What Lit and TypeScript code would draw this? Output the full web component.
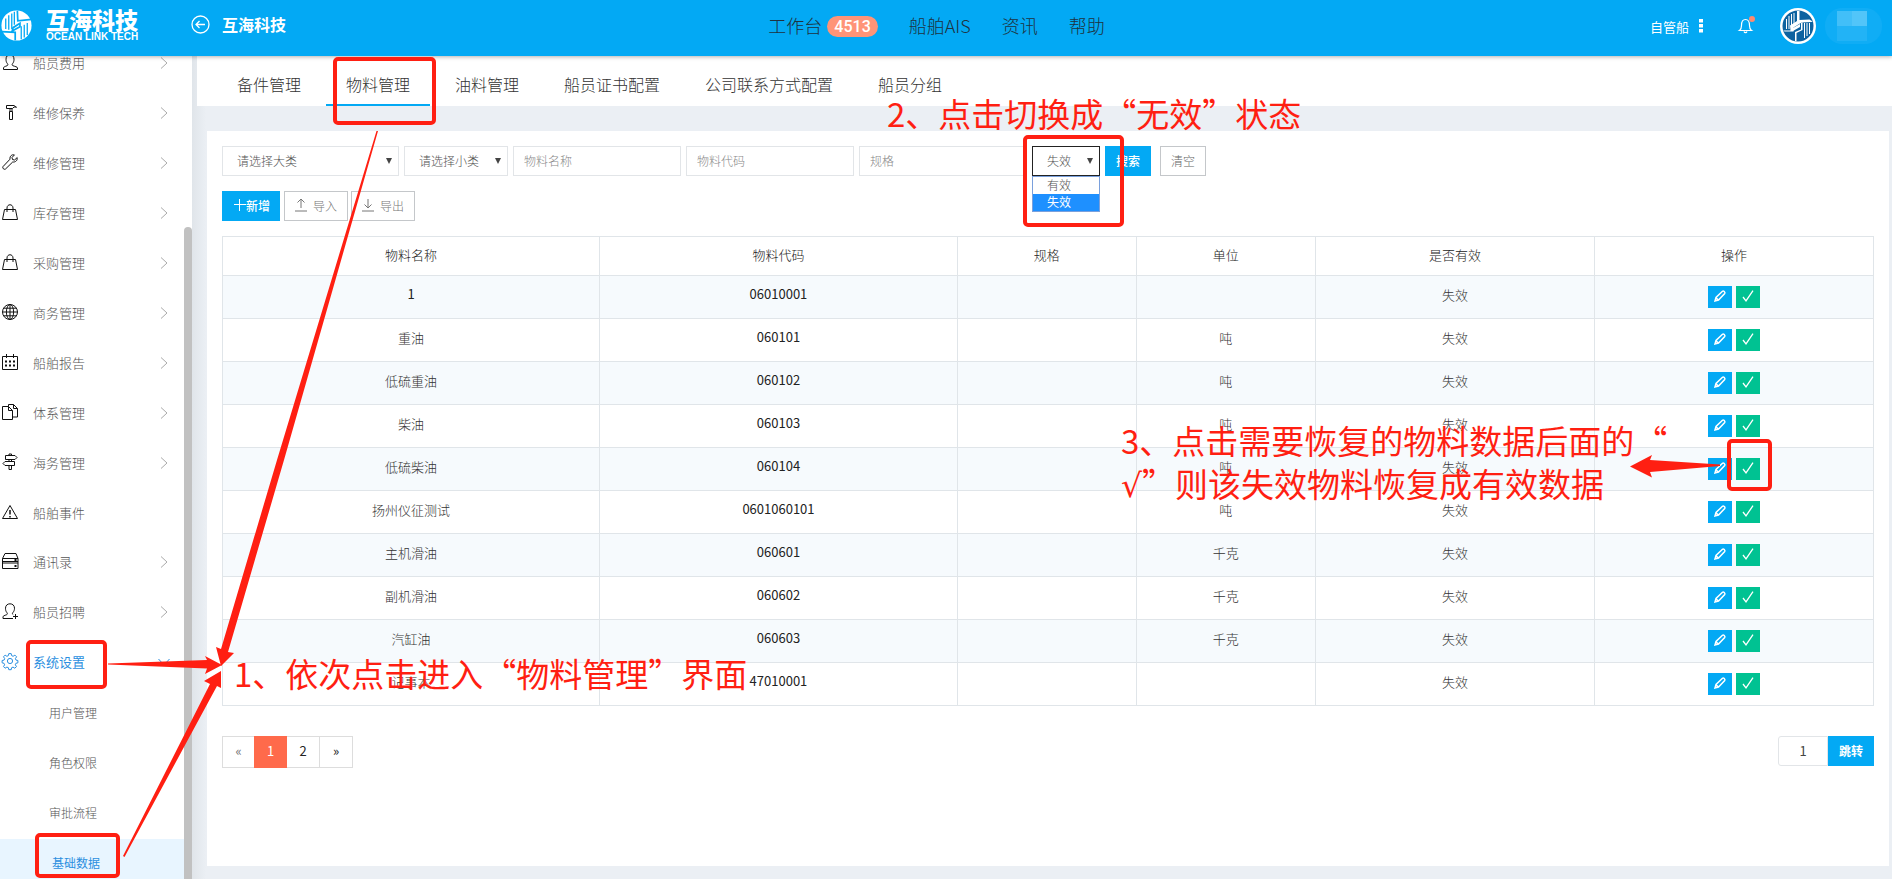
import { LitElement, html, svg, css } from "lit";
import { customElement, property } from "lit/decorators.js";
import { classMap } from "lit/directives/class-map.js";

const icons = {
  user: svg`<path d="M1.5 15.5v-1.6c0-1 1.6-1.4 3.6-2.2 1-.4.9-1.4.3-2.1C4.400 8.500 4 7 4 5.200 4 2.300 5.600.8 8 .8s4 1.500 4 4.400c0 1.800-.4 3.300-1.400 4.400-.6.7-.7 1.700.3 2.100 2 .8 4.600 1.200 4.600 2.200v1.600z"/>`,
  hammer: svg`<path d="M4.500 1.500h7.500l2.500 2M4.500 1.500v3h6l1.500-1.500h2.500M7.500 7.500h3v8h-3zM8 4.500v3M10 4.500v3"/>`,
  wrench: svg`<path d="M15.200 3.600 12.500 6l-2-.5L10 3.500 12.400.9C10 .2 7.600 2 8 5.200L1 12.600c-1 1.400 1 3.500 2.500 2.400L10.700 8c2.800.4 5-1.600 4.500-4.400z"/>`,
  bag: svg`<path d="M2.500 5.500h11l2 10H.5zM5 8V4c0-4.300 6-4.300 6 0v4"/>`,
  globe: svg`<circle cx="8" cy="8" r="7.500"/><ellipse cx="8" cy="8" rx="3.600" ry="7.500"/><path d="M8 .5v15M.5 8h15M1.700 4.200h12.600M1.700 11.800h12.600"/>`,
  calendar: svg`<path d="M.5 2.500h15v13H.5zM4.500 0v4M11.500 0v4"/><path stroke-width="2" d="M3 7.500h2M7 7.500h2M11 7.500h2M3 11.500h2M7 11.500h2M11 11.500h2"/>`,
  docs: svg`<path d="M.5 2.500h6l4 4v9H.5zM6.500 2.500v4h4M6.500 2.500v-2h5l4 4v8.500h-5M11.500.5v4h4"/>`,
  sign: svg`<path d="M3.500 1.500h9.500l2 2-2 2H3.500zM12.500 7.500H3l-2 2 2 2h9.500zM7 5.500v2M9.500 5.500v2M7 11.500v4h2.500v-4M7 1.500V0h2.500v1.500"/>`,
  warn: svg`<path d="M8 1.500 15.500 14.500H.5z"/><path stroke-width="1.500" d="M8 6v4.500M8 12v1.500"/>`,
  server: svg`<path d="M.5 5.500 3 .5h11l2 5v10H.5zM.5 5.500H16M.5 8.500H16M.5 10H16"/><path stroke-width="1.800" d="M12.500 7h2M12.500 13h2"/>`,
  recruit: svg`<path d="M11 15.500H1v-1.600c0-1 1.600-1.400 3.600-2.200 1-.4.9-1.400.3-2.100C3.900 8.500 3.500 7 3.500 5.200 3.500 2.300 5.600.8 8 .8s4.500 1.500 4.500 4.400c0 1.800-.6 3.300-1.600 4.400-.6.7-.7 1.500.3 2.100M13.500 11v5M11 13.500h5"/>`,
  gear: svg`<circle cx="8" cy="8" r="2.600"/><path d="M6.800.6h2.400l.4 2 1.500.7 1.800-1.200 1.700 1.700-1.200 1.800.6 1.500 1.900.4v2.300l-2 .5-.6 1.500 1.200 1.800-1.700 1.600-1.800-1.100-1.400.6-.4 2H6.800l-.4-2-1.500-.6-1.800 1.100-1.600-1.600 1.100-1.800-.6-1.500-1.900-.5V7.500l2-.4.600-1.500-1.200-1.800 1.600-1.700 1.800 1.200 1.500-.700z"/>`,
};

type IconName = keyof typeof icons;

interface MenuItem {
  name: string;
  icon: IconName;
  leaf?: boolean;
  open?: boolean;
}

const menu: MenuItem[] = [
  { name: "船员费用", icon: "user" },
  { name: "维修保养", icon: "hammer" },
  { name: "维修管理", icon: "wrench" },
  { name: "库存管理", icon: "bag" },
  { name: "采购管理", icon: "bag" },
  { name: "商务管理", icon: "globe" },
  { name: "船舶报告", icon: "calendar" },
  { name: "体系管理", icon: "docs" },
  { name: "海务管理", icon: "sign" },
  { name: "船舶事件", icon: "warn", leaf: true },
  { name: "通讯录", icon: "server" },
  { name: "船员招聘", icon: "recruit" },
  { name: "系统设置", icon: "gear", open: true },
];

const submenu = ["用户管理", "角色权限", "审批流程", "基础数据"];

const tabs = ["备件管理", "物料管理", "油料管理", "船员证书配置", "公司联系方式配置", "船员分组"];

const columns = ["物料名称", "物料代码", "规格", "单位", "是否有效", "操作"];

const rows: [string, string, string][] = [
  ["1", "06010001", ""],
  ["重油", "060101", "吨"],
  ["低硫重油", "060102", "吨"],
  ["柴油", "060103", "吨"],
  ["低硫柴油", "060104", "吨"],
  ["扬州仪征测试", "0601060101", "吨"],
  ["主机滑油", "060601", "千克"],
  ["副机滑油", "060602", "千克"],
  ["汽缸油", "060603", "千克"],
  ["记事本", "47010001", ""],
];

@customElement("top-bar")
class TopBar extends LitElement {
  static styles = css`
    :host { display: block; position: relative; z-index: 2; }
    .bar {
      display: grid; grid-template-columns: 1fr auto 1fr; align-items: center;
      height: 56px; background: #03a9f4; color: #fff;
      box-shadow: 0 1px 4px rgba(0, 0, 0, 0.3);
    }
    a { color: inherit; text-decoration: none; }
    .left { display: flex; align-items: center; height: 56px; }
    .logo { display: flex; align-items: center; width: 191px; gap: 14px; padding-bottom: 6px; }
    .mark { width: 31px; height: 31px; margin-left: 1px; }
    .brand { display: flex; flex-direction: column; gap: 1px; padding-bottom: 3px; }
    .cn { font-size: 23px; line-height: 24px; font-weight: 900; }
    .en { font: bold 10px/9px "Liberation Sans", sans-serif; }
    .back { display: flex; align-items: center; gap: 12px; font-size: 16px; font-weight: 700; padding-bottom: 8px; }
    .back svg { width: 19px; height: 19px; }
    .nav { display: flex; align-items: center; gap: 31px; padding: 0 19px 6px 0; font-size: 18px; line-height: 26px; color: #1f3240; }
    .work { display: flex; align-items: center; gap: 5px; }
    .badge {
      font: 500 16px/21px "Roboto", sans-serif; color: #fff; background: #ff9478;
      border-radius: 11px; padding: 0 7px; margin-top: 3px;
    }
    .right { display: flex; align-items: center; justify-content: flex-end; padding: 0 10px 4px 0; }
    .fleet {
      display: flex; align-items: center; gap: 10px; border: 0; background: none;
      padding: 0; color: #fff; font: inherit; font-size: 13px; font-weight: 400;
    }
    .dots { width: 4px; height: 14px; }
    .bell { border: 0; background: none; padding: 0; margin: 0 25px 0 34px; height: 22px; }
    .bell svg { width: 18px; height: 18px; }
    .avatar { width: 36px; height: 36px; margin-right: 9px; }
    .account { width: 57px; height: 36px; }
  `;

  render() {
    return html`
      <header class="bar">
        <div class="left">
          <a class="logo" href="#">
            <svg class="mark" viewBox="0 0 36 36">
              <circle cx="18" cy="18" r="17.500" fill="#fff" />
              <path fill="none" stroke="#03a9f4" stroke-width="1.500" d="M5.500 10v12M9 6v17M12.500 4v18M15.500 2v15M23.500 19v15M27 17v15M30.500 15v14" />
              <path fill="none" stroke="#03a9f4" stroke-width="2" d="m19 1 .5 11.500 16-1.500M16.500 35v-9L.5 25M13 24.500l9-5v-4l-8 5z" />
            </svg>
            <span class="brand"><span class="cn">互海科技</span><span class="en">OCEAN LINK TECH</span></span>
          </a>
          <a class="back" href="#">
            <svg viewBox="0 0 19 19" fill="none" stroke="#fff" stroke-width="1.300">
              <circle cx="9.500" cy="9.500" r="8.500" /><path d="M14 9.500H5.500M8.500 6 5 9.500 8.500 13" />
            </svg>互海科技</a>
        </div>
        <nav class="nav">
          <a class="work" href="#">工作台<span class="badge">4513</span></a>
          <a href="#">船舶AIS</a><a href="#">资讯</a><a href="#">帮助</a>
        </nav>
        <div class="right">
          <button class="fleet">自管船
            <svg class="dots" viewBox="0 0 4 14" fill="#fff"><path d="M0 0h4v3.500H0zM0 5h4v3.500H0zM0 10h4v3.500H0z" /></svg>
          </button>
          <button class="bell" aria-label="通知">
            <svg viewBox="0 0 18 18" fill="none" stroke="#fff" stroke-width="1.200">
              <path d="M2.500 14.500c1.500-1 2-2.200 2-5C4.500 5 6 3.500 8.500 3.500s4 1.500 4 6c0 2.800.5 4 2 5zM7 15.500c.5 1.500 2.500 1.500 3 0" />
              <circle cx="15" cy="3" r="3" fill="#ff8a70" stroke="none" />
            </svg>
          </button>
          <svg class="avatar" viewBox="0 0 36 36">
            <circle cx="18" cy="18" r="18" fill="#fff" /><circle cx="18" cy="18" r="15.500" fill="#0d62a0" />
            <path fill="#fff" d="M17 3h2.500v9l10-.5 3 2-1 .5-10 .5-8 5v4h-9l-1-1h7l-.5-5 7-4.500zM15 33v-9l6-2.500V15l1.500-.5V22l-6 3v8z" />
            <path fill="none" stroke="#fff" d="M6.500 11v10M9 8v13M11.500 6v12M14 5v11M24.500 15v15M27 15v13M29.500 15v11" />
            <path fill="#fff" d="m13 23 7-4v-3l-8 4.500z" />
          </svg>
          <svg class="account" viewBox="0 0 57 36" aria-label="账户">
            <rect width="57" height="36" rx="17" fill="#10adf5" />
            <path fill="#42bff8" d="M12 3h15v15H12z" /><path fill="#52c5f9" d="M27 3h15v15H27z" />
            <path fill="#22b3f6" d="M12 18h30v15H12z" />
          </svg>
        </div>
      </header>
    `;
  }
}

@customElement("side-menu")
class SideMenu extends LitElement {
  static styles = css`
    :host { display: flex; position: relative; width: 192px; flex: none; overflow: hidden; background: #fff; }
    .list { flex: 1; margin-top: -17px; }
    a { display: flex; align-items: center; box-sizing: border-box; height: 50px; padding-bottom: 3px; color: #555; text-decoration: none; font-size: 13px; }
    a.leaf { height: 49px; }
    .icon { width: 16px; height: 16px; margin: 0 15px 1px 2px; overflow: visible; fill: none; stroke: #111; }
    .name { flex: 1; }
    .arrow { width: 8px; height: 12px; margin-right: 16px; fill: none; stroke: #aaa; }
    .open { color: #2b8fe0; font-weight: 400; }
    .open .icon, .open .arrow { stroke: #2b8fe0; }
    .open .arrow { transform: rotate(90deg); }
    .sub { padding-top: 1px; }
    .sub a { padding-left: 49px; font-size: 12px; }
    .sub a.current { background: #e8f5ff; color: #2b8fe0; padding-left: 52px; font-weight: 400; }
    .track { width: 8px; padding-top: 171px; display: flex; }
    .thumb { flex: 1; background: #c1c1c1; border-radius: 4px 4px 0 0; }
  `;

  render() {
    return html`
      <nav class="list">
        ${menu.map(
          (m) => html`<a href="#" class=${classMap({ leaf: !!m.leaf, open: !!m.open })}>
            <svg class="icon" viewBox="0 0 16 16">${icons[m.icon]}</svg>
            <span class="name">${m.name}</span>
            ${m.leaf ? "" : html`<svg class="arrow" viewBox="0 0 8 12"><path d="m1 .5 6 5.500-6 5.500" /></svg>`}
          </a>`
        )}
        <div class="sub">
          ${submenu.map((s) => html`<a href="#" class=${classMap({ current: s === "基础数据" })}>${s}</a>`)}
        </div>
      </nav>
      <div class="track"><div class="thumb"></div></div>
    `;
  }
}

@customElement("material-page")
class MaterialPage extends LitElement {
  static styles = css`
    :host { display: flex; flex-direction: column; flex: 1; min-width: 0; padding-left: 5px; background: linear-gradient(to right, #e0e5ea, #ebeff4 14px); }
    * { box-sizing: border-box; }
    button, input, select { font: inherit; font-size: 12px; border-radius: 0; margin: 0; }
    .tabs { display: flex; gap: 5px; height: 50px; background: #fff; padding-left: 20px; }
    .tabs a { padding: 0 20px; line-height: 57px; font-size: 16px; color: #333; text-decoration: none; height: 50px; overflow: hidden; }
    .tabs a.on { border-bottom: 2px solid #03a9f4; }
    .card { flex: 1; margin: 25px 3px 13px 10px; background: #fff; padding: 15px; }
    .filters { display: flex; gap: 5px; height: 30px; }
    .pick { position: relative; }
    .pick select {
      appearance: none; width: 100%; height: 30px; border: 1px solid #e2e5e8; background: #fff;
      color: #555; padding: 0 14px 2px;
    }
    .pick svg { position: absolute; right: 7px; top: 12px; width: 6px; height: 6px; fill: #444; pointer-events: none; }
    .major { width: 177px; }
    .minor { width: 104px; }
    .state { width: 68px; }
    .pick.state select { border-color: #222; }
    .options {
      position: absolute; top: 30px; left: 0; right: 0; z-index: 1; margin: 0; padding: 0; list-style: none;
      border: 1px solid #7aa0dc; background: #fff; font-size: 12px; line-height: 16px; color: #555;
    }
    .options li { padding: 0 14px 1px; }
    .options .chosen { background: #1e90ff; color: #fff; font-weight: 400; }
    input { width: 168px; height: 30px; border: 1px solid #e2e5e8; padding: 0 10px 2px; color: #444; outline: 0; background: #fff; }
    input::placeholder { color: #888; }
    .btn { height: 30px; border: 1px solid #c4c7ca; background: #fff; color: #666; padding: 0 10px 2px; display: flex; align-items: center; white-space: nowrap; }
    .primary { border-color: #03a9f4; background: #03a9f4; color: #fff; font-weight: 500; }
    .clear { margin-left: 4px; }
    .tools { display: flex; gap: 3px; margin: 15px 0; }
    .tools .primary { width: 58px; margin-right: 1px; }
    .tools svg { width: 14px; height: 14px; flex: none; fill: none; stroke: currentColor; }
    .plus { margin-right: -1px; }
    .tools .io { gap: 5px; width: 64px; padding: 0 9px 2px; color: #777; }
    table { width: 100%; border-collapse: collapse; table-layout: fixed; font-size: 13px; }
    th, td { border: 1px solid #e0e5e9; text-align: center; padding: 0 0 5px; }
    th { font-weight: 300; color: #222; height: 39px; padding-bottom: 4px; }
    td { height: 43px; line-height: 20px; color: #333; }
    .num { color: #222; font-weight: 400; padding-bottom: 6px; }
    tbody tr:nth-child(odd) { background: #f6fafd; }
    .c-name { width: 22.85%; }
    .c-code { width: 21.65%; }
    .c-small { width: 10.85%; }
    .c-mid { width: 16.9%; }
    td.ops { padding: 0; }
    .pair { display: flex; justify-content: center; gap: 4px; }
    .act { width: 24px; height: 22px; border: 0; padding: 4px 6px 6px; background: #03a9f4; }
    .act.ok { background: #00c292; }
    .act svg { display: block; width: 12px; height: 12px; fill: none; stroke: #fff; overflow: visible; }
    .foot { display: flex; justify-content: space-between; margin-top: 30px; }
    .pages { display: flex; }
    .pages a { width: 34px; height: 32px; margin-right: -1px; border: 1px solid #ddd; text-align: center; line-height: 28px; font-size: 13px; font-weight: 400; color: #222; text-decoration: none; }
    .pages a:first-child, .pages a.on { width: 33px; }
    .pages .on { background: #ff6a4b; border-color: #ff6a4b; color: #fff; position: relative; }
    .pages .off { color: #777; }
    .jump { display: flex; }
    .jump input { width: 50px; text-align: center; border-radius: 3px 0 0 3px; font-size: 13px; font-weight: 400; }
    .jump .btn { font-weight: 700; }
  `;

  private caret = html`<svg viewBox="0 0 7 7"><path d="M0 0h7L3.500 7z" /></svg>`;

  render() {
    return html`
      <nav class="tabs">
        ${tabs.map((t) => html`<a href="#" class=${classMap({ on: t === "物料管理" })}>${t}</a>`)}
      </nav>
      <section class="card">
        <form class="filters" @submit=${(e: Event) => e.preventDefault()}>
          <div class="pick major"><select aria-label="大类"><option>请选择大类</option></select>${this.caret}</div>
          <div class="pick minor"><select aria-label="小类"><option>请选择小类</option></select>${this.caret}</div>
          <input aria-label="物料名称" placeholder="物料名称" />
          <input aria-label="物料代码" placeholder="物料代码" />
          <input aria-label="规格" placeholder="规格" />
          <div class="pick state">
            <select aria-label="是否有效"><option>有效</option><option selected>失效</option></select>${this.caret}
            <ul class="options" role="listbox" aria-label="是否有效">
              <li role="option">有效</li>
              <li role="option" class="chosen" aria-selected="true">失效</li>
            </ul>
          </div>
          <button class="btn primary">搜索</button>
          <button class="btn clear" type="reset">清空</button>
        </form>
        <div class="tools">
          <button class="btn primary"><svg class="plus" viewBox="0 0 14 14"><path d="M1 6.500h12M6.500 1v12" /></svg>新增</button>
          <button class="btn io"><svg viewBox="0 0 14 14"><path d="M7 10V1M3.500 4.500 7 1l3.500 3.500M1 13h12" /></svg>导入</button>
          <button class="btn io"><svg viewBox="0 0 14 14"><path d="M7 1v9M3.500 6.500 7 10l3.500-3.500M1 13h12" /></svg>导出</button>
        </div>
        <table>
          <colgroup>
            <col class="c-name" /><col class="c-code" /><col class="c-small" /><col class="c-small" /><col class="c-mid" /><col />
          </colgroup>
          <thead><tr>${columns.map((c) => html`<th>${c}</th>`)}</tr></thead>
          <tbody>
            ${rows.map(
              ([name, code, unit]) => html`<tr>
                <td class=${classMap({ num: name === "1" })}>${name}</td>
                <td class="num">${code}</td>
                <td></td>
                <td>${unit}</td>
                <td>失效</td>
                <td class="ops">
                  <div class="pair">
                    <button class="act" aria-label="编辑">
                      <svg viewBox="0 0 12 12"><path stroke-width="1.500" d="m1 11 1-3.500L8.500 1.300c1-.9 3 .900 2.200 2.200L4.500 10zM2 7.800 4.300 10" /></svg>
                    </button>
                    <button class="act ok" aria-label="恢复">
                      <svg viewBox="0 0 12 12"><path stroke-width="1.300" d="m1 7 3 3.800L11 .7" /></svg>
                    </button>
                  </div>
                </td>
              </tr>`
            )}
          </tbody>
        </table>
        <div class="foot">
          <nav class="pages">
            <a class="off" href="#">«</a><a class="on" href="#">1</a><a href="#">2</a><a href="#">»</a>
          </nav>
          <form class="jump" @submit=${(e: Event) => e.preventDefault()}>
            <input aria-label="页码" value="1" /><button class="btn primary">跳转</button>
          </form>
        </div>
      </section>
    `;
  }
}

@customElement("guide-note")
class GuideNote extends LitElement {
  @property({ type: Number }) step = 0;
  static styles = css`
    :host { position: absolute; color: #ff1f12; font-size: 33px; line-height: 43px; font-weight: 400; white-space: pre; }
  `;
  render() {
    return html`${this.step}、<slot></slot>`;
  }
}

@customElement("app-root")
class AppRoot extends LitElement {
  static styles = css`
    :host {
      display: flex; flex-direction: column; position: relative; height: 100vh; overflow: hidden;
      background: #ebeff4; font-family: "Noto Sans CJK SC", sans-serif; font-weight: 300; font-size: 13px;
    }
    .body { flex: 1; display: flex; min-height: 0; }
    .marks { position: absolute; inset: 0; width: 100%; height: 100%; z-index: 3; pointer-events: none; }
    .boxes { fill: none; stroke: #ff1f12; stroke-width: 4; }
    .arrows { fill: #ff1f12; }
    guide-note { z-index: 4; }
    .n1 { left: 234px; top: 652px; }
    .n2 { left: 887px; top: 92px; }
    .n3 { left: 1121px; top: 419px; }
    .root { font-family: "DejaVu Sans", sans-serif; line-height: 1; }
  `;

  render() {
    return html`
      <top-bar></top-bar>
      <div class="body">
        <side-menu></side-menu>
        <material-page></material-page>
      </div>
      <svg class="marks" aria-hidden="true">
        <g class="boxes">
          <rect x="335" y="59" width="99" height="64" rx="3" />
          <rect x="1025" y="137" width="97" height="88" rx="3" />
          <rect x="28" y="642" width="77" height="45" rx="3" />
          <rect x="37" y="835" width="81" height="41" rx="3" />
          <rect x="1729" y="441" width="41" height="48" rx="3" />
        </g>
        <g class="arrows">
          <path d="M376.500 131h1.500L284 460 228 652l6 1-13 13-5-19 5 2L277 460z" />
          <path d="M108 663.500 207 660l-2-4 17 9-17 9 2-5.500-99-4z" />
          <path d="m123 856 87-172-6-3 17-10v17l-4-2L124.500 857z" />
          <path d="m1720 464.500-70-4.500 2-5-22 11.500 22 11-2-5.500 70-6z" />
        </g>
      </svg>
      <guide-note class="n1" step="1">依次点击进入“物料管理”界面</guide-note>
      <guide-note class="n2" step="2">点击切换成“无效”状态</guide-note>
      <guide-note class="n3" step="3">点击需要恢复的物料数据后面的“
<span class="root">√</span>”则该失效物料恢复成有效数据</guide-note>
    `;
  }
}
